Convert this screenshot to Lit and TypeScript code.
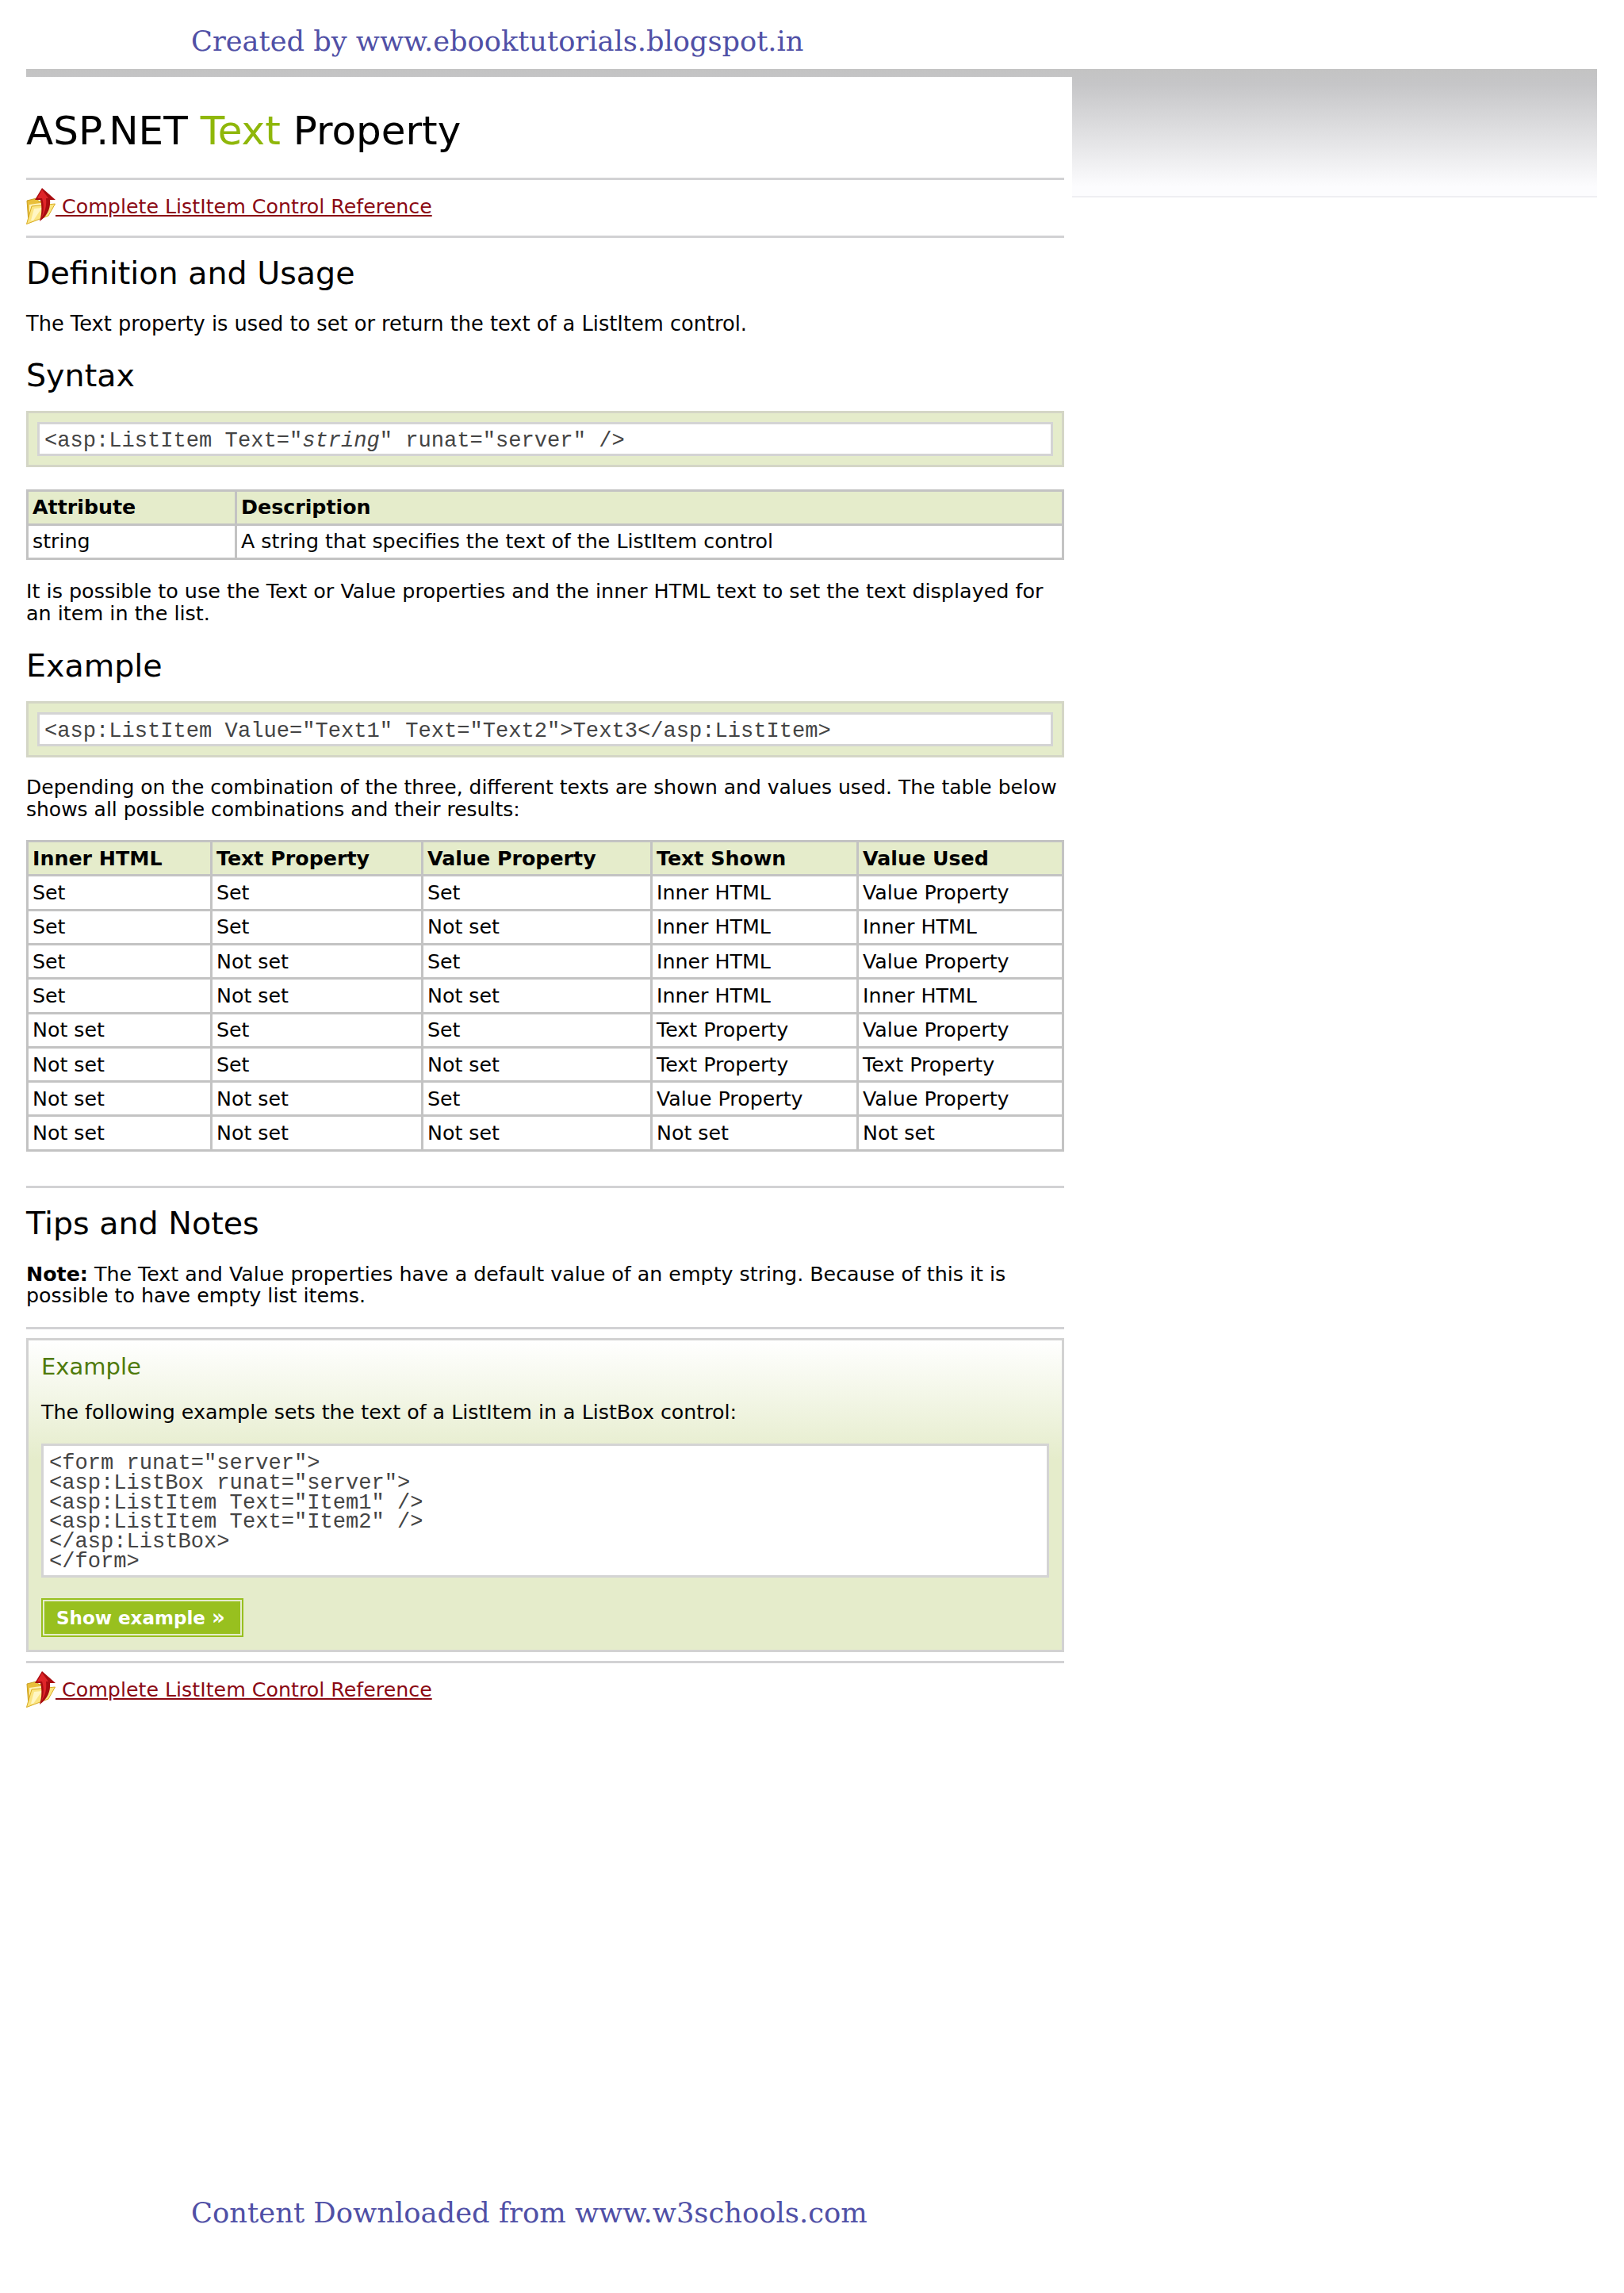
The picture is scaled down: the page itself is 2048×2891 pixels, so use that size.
import { LitElement, html, css, svg } from "lit";
import { customElement } from "lit/decorators.js";

const rows = [
  ["Set", "Set", "Set", "Inner HTML", "Value Property"],
  ["Set", "Set", "Not set", "Inner HTML", "Inner HTML"],
  ["Set", "Not set", "Set", "Inner HTML", "Value Property"],
  ["Set", "Not set", "Not set", "Inner HTML", "Inner HTML"],
  ["Not set", "Set", "Set", "Text Property", "Value Property"],
  ["Not set", "Set", "Not set", "Text Property", "Text Property"],
  ["Not set", "Not set", "Set", "Value Property", "Value Property"],
  ["Not set", "Not set", "Not set", "Not set", "Not set"],
];
const heads = ["Inner HTML", "Text Property", "Value Property", "Text Shown", "Value Used"];

const icon = svg`<svg class="ico" viewBox="0 0 37 46" width="37" height="46">
  <path d="M1 16 L13 13 L16 17 L28 15 L28 32 L3 43 Z" fill="#e9bf3a" stroke="#c9a024" stroke-width="1"/>
  <path d="M4 21 L25 18 L25 30 L4 40 Z" fill="#fff3b8"/>
  <path d="M0.5 45.5 L7 23 L36.5 20 L28 35 Z" fill="#fbe582" stroke="#d8ab22" stroke-width="1"/>
  <path d="M6 41 L10 26 L20 25 L9 41 Z" fill="#fff6c4"/>
  <path d="M20 0 L37 15 L30 15 C31 25 27 35 17 42 C20 32 20 23 18 15 L11 15 Z" fill="#a80c10"/>
  <path d="M20 2 L14 13 L20 13 C23 22 22 31 19 38 C24 31 26 23 25 13 L28 13 Z" fill="#df2529"/>
</svg>`;

@customElement("app-root")
export class AppRoot extends LitElement {
  static styles = css`
    :host {
      display: flex;
      flex-direction: column;
      min-height: 2891px;
      background: #fff;
      color: #000;
      font-family: "DejaVu Sans", Verdana, sans-serif;
      font-size: 25.3px;
      line-height: 27.5px;
    }
    .stamp {
      font-family: "DejaVu Serif", serif;
      font-size: 35.2px;
      line-height: 44px;
      color: #5050a6;
      margin-left: 241px;
    }
    .top { padding-top: 30px; height: 87px; box-sizing: border-box; }
    .bottom { margin-top: auto; padding-bottom: 79px; font-size: 35.35px; }
    .wrap {
      margin-left: 33px;
      width: 1981px;
      padding-top: 10px;
      background:
        linear-gradient(#c3c3c3 0, #c6c6c8 20px, #fcfcfe 148px, #fcfcfe 160px, #eeeef2 160px, #eeeef2 162px, transparent 162px)
        no-repeat top / 100% 162px;
    }
    .main { width: 1309px; padding-right: 10px; background: #fff; }
    h1 {
      margin: 0;
      padding-top: 38px;
      height: 127px;
      box-sizing: border-box;
      font-weight: 400;
      font-size: 50px;
      line-height: 60px;
    }
    .hl { color: #8fb70a; }
    h2 { margin: 22px 0 0; font-weight: 400; font-size: 39.6px; line-height: 44px; }
    h2.sec { margin-top: 28px; }
    h2.sec2 { margin-top: 30px; }
    p { margin: 0; }
    hr { border: 0; height: 3px; background: #d2d2d4; margin: 0; }
    .nav { display: flex; align-items: flex-start; height: 70px; padding-top: 10px; box-sizing: border-box; }
    .nav a {
      color: #8b0a14;
      text-decoration: underline;
      display: flex;
      align-items: flex-start;
    }
    .ico { flex: none; }
    .nav span { margin-top: 10px; white-space: pre; }
    .after-h2 { margin-top: 29px; }
    .def { font-size: 25.66px; }
    .possible { font-size: 25.45px; margin-top: 26px; }
    .depending { font-size: 25px; margin-top: 24px; }
    .note { margin-top: 29px; }
    .code {
      background: #e5eccb;
      border: 3px solid #d4d6c6;
      padding: 11px;
      margin-top: 23px;
    }
    .code div {
      background: #fff;
      border: 3px solid #d4d4d4;
      padding: 0 6px;
      height: 37px;
      font: 27.1px/41px "Liberation Mono", monospace;
      color: #444;
      white-space: pre;
    }
    table {
      border-collapse: collapse;
      width: 100%;
      table-layout: fixed;
    }
    th, td {
      border: 3px solid #c3c3c3;
      padding: 0 5px;
      height: 40.3px;
      text-align: left;
      line-height: 27px;
      font-weight: 400;
    }
    th { background: #e5eccb; font-weight: 700; }
    .t1 { margin-top: 28px; }
    .t2 { margin-top: 25px; }
    .t1 col:nth-child(1) { width: 263px; }
    .t2 col:nth-child(1) { width: 232px; }
    .t2 col:nth-child(2) { width: 266px; }
    .t2 col:nth-child(3) { width: 289px; }
    .t2 col:nth-child(4) { width: 260px; }
    .rule-a { margin-top: 43px; }
    .rule-b { margin-top: 25px; }
    .rule-c { margin-top: 11px; }
    .ex {
      border: 3px solid #d2d2d2;
      padding: 15px 16px 16px;
      margin-top: 11px;
      background: linear-gradient(#fff 0, #e5eccb 150px);
    }
    .ex h3 { margin: 0; font-weight: 400; font-size: 29px; line-height: 36px; color: #4f7a0a; }
    .ex p { margin-top: 26px; }
    .ex pre {
      margin: 26px 0 0;
      background: #fff;
      border: 3px solid #d4d4d4;
      padding: 10px 7px 5px;
      font: 27.1px/24.7px "Liberation Mono", monospace;
      color: #444;
    }
    .actions { margin-top: 26px; }
    .btn {
      display: inline-block;
      border: 2px solid #98c01f;
      padding: 2px;
      background: #e5eccb;
    }
    .btn span {
      display: block;
      box-sizing: border-box;
      background: #98c01f;
      color: #fff;
      font-weight: 700;
      font-size: 23px;
      line-height: 40px;
      padding: 0 15px;
      width: 247px;
      white-space: nowrap;
    }
    .btn i { font-style: normal; font-size: 26px; }
  `;

  nav() {
    return html`<div class="nav"><a href="#">${icon}<span> Complete ListItem Control Reference</span></a></div>`;
  }

  render() {
    return html`
      <div class="stamp top">Created by www.ebooktutorials.blogspot.in</div>
      <div class="wrap">
        <div class="main">
          <h1>ASP.NET <span class="hl">Text</span> Property</h1>
          <hr />
          ${this.nav()}
          <hr />
          <h2>Definition and Usage</h2>
          <p class="after-h2 def">The Text property is used to set or return the text of a ListItem control.</p>
          <h2 class="sec">Syntax</h2>
          <div class="code"><div>&lt;asp:ListItem Text="<em>string</em>" runat="server" /&gt;</div></div>
          <table class="t1">
            <colgroup><col /><col /></colgroup>
            <tr><th>Attribute</th><th>Description</th></tr>
            <tr><td>string</td><td>A string that specifies the text of the ListItem control</td></tr>
          </table>
          <p class="possible">It is possible to use the Text or Value properties and the inner HTML text to set the text displayed for an item in the list.</p>
          <h2 class="sec2">Example</h2>
          <div class="code"><div>&lt;asp:ListItem Value="Text1" Text="Text2"&gt;Text3&lt;/asp:ListItem&gt;</div></div>
          <p class="depending">Depending on the combination of the three, different texts are shown and values used. The table below shows all possible combinations and their results:</p>
          <table class="t2">
            <colgroup><col /><col /><col /><col /><col /></colgroup>
            <tr>${heads.map((h) => html`<th>${h}</th>`)}</tr>
            ${rows.map((r) => html`<tr>${r.map((c) => html`<td>${c}</td>`)}</tr>`)}
          </table>
          <hr class="rule-a" />
          <h2>Tips and Notes</h2>
          <p class="note"><b>Note:</b> The Text and Value properties have a default value of an empty string. Because of this it is possible to have empty list items.</p>
          <hr class="rule-b" />
          <div class="ex">
            <h3>Example</h3>
            <p>The following example sets the text of a ListItem in a ListBox control:</p>
            <pre>&lt;form runat="server"&gt;
&lt;asp:ListBox runat="server"&gt;
&lt;asp:ListItem Text="Item1" /&gt;
&lt;asp:ListItem Text="Item2" /&gt;
&lt;/asp:ListBox&gt;
&lt;/form&gt;</pre>
            <div class="actions"><a class="btn"><span>Show example <i>»</i></span></a></div>
          </div>
          <hr class="rule-c" />
          ${this.nav()}
        </div>
      </div>
      <div class="stamp bottom">Content Downloaded from www.w3schools.com</div>
    `;
  }
}
